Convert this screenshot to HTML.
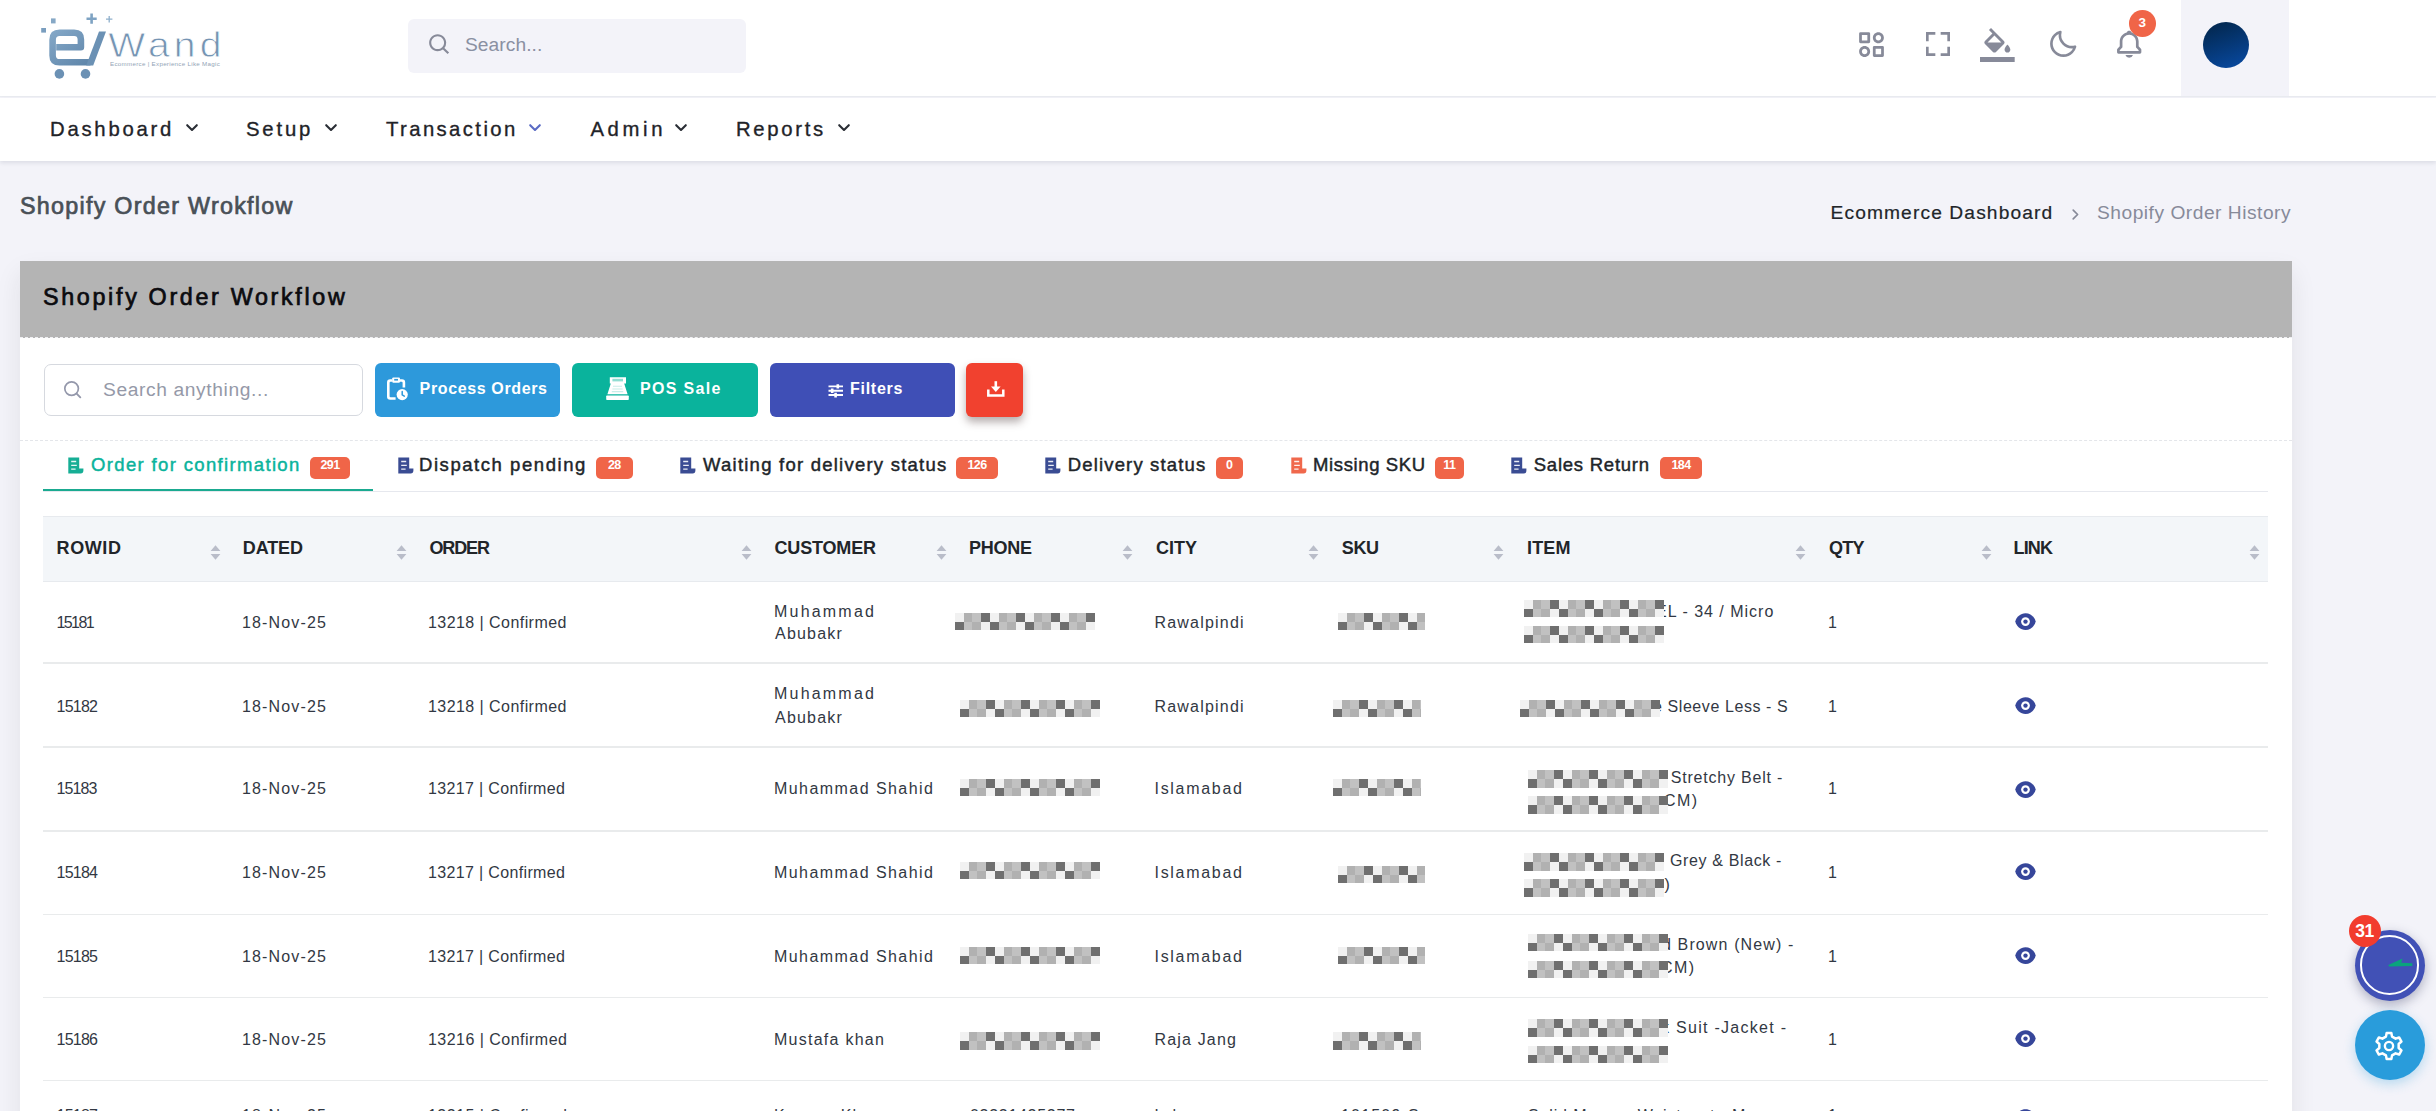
<!DOCTYPE html>
<html lang="en"><head><meta charset="utf-8"><title>Shopify Order Workflow</title>
<style>
*{box-sizing:border-box;margin:0;padding:0}
html,body{width:2436px;height:1111px;overflow:hidden;background:#f3f3f9;font-family:"Liberation Sans",sans-serif}
#pg{position:relative;width:2436px;height:1111px;overflow:hidden;background:#f3f3f9}
.a{position:absolute}
.t{position:absolute;white-space:nowrap;line-height:1em;display:block}
.px{position:absolute;height:17.5px;z-index:1;background:
 linear-gradient(90deg,#f1f1f1 0 25%,#b1b1b1 25% 50%,#c1c1c1 50% 75%,#6f6f6f 75% 100%) 0 0/35px 8.75px repeat-x,
 linear-gradient(90deg,#6f6f6f 0 25%,#c1c1c1 25% 50%,#b1b1b1 50% 75%,#f1f1f1 75% 100%) 0 8.75px/35px 8.75px repeat-x}
.btn{position:absolute;top:363px;height:53.5px;border-radius:6px}
.bdg{position:absolute;top:457px;height:22px;border-radius:5px;background:#f06548;color:#fff;font-weight:700;font-size:12.5px;line-height:17px;text-align:center;letter-spacing:-0.6px}
.rl{position:absolute;left:43px;width:2225px;height:1.5px;background:#e9ebec}
svg{position:absolute;overflow:visible}
</style></head><body><div id="pg">

<div class="a" style="left:0;top:0;width:2436px;height:97px;background:#fff;border-bottom:1.5px solid #e9ebf0"></div>
<div class="a" style="left:2181px;top:0;width:108px;height:96px;background:#f3f3f9"></div>
<div class="a" style="left:2203px;top:22px;width:46px;height:46px;border-radius:50%;background:linear-gradient(160deg,#032a55 15%,#0849a0 95%)"></div>
<div class="a" style="left:407.5px;top:19px;width:338.5px;height:54px;border-radius:6px;background:#f3f3f9"></div>
<svg style="left:0;top:0" width="260" height="96" viewBox="0 0 260 96">
<defs><linearGradient id="lg" x1="0" y1="0" x2="1" y2="1"><stop offset="0" stop-color="#82a6c6"/><stop offset="1" stop-color="#5f86aa"/></linearGradient></defs>
<path d="M56.200 47.200 H80.900 V39.500 Q80.900 32.800 74.200 32.800 H59.600 Q52.600 32.800 52.600 39.800 V55.400 Q52.600 62.300 59.600 62.300 H90.500" fill="none" stroke="url(#lg)" stroke-width="6.600" stroke-linejoin="round"/>
<path d="M99 31.500 H106 L93.200 65.600 H86.200 Z" fill="#6b91b4"/>
<circle cx="59.400" cy="73.900" r="4.800" fill="#6b91b4"/><circle cx="85.500" cy="73.900" r="4.800" fill="#6b91b4"/>
<rect x="41.200" y="28" width="4.800" height="4.600" fill="#7a9ebf"/><rect x="51" y="18.400" width="4.600" height="5" fill="#86a8c6"/>
<path d="M91.600 13.600 V23.800 M86.500 18.700 H96.700" stroke="#7fa3c3" stroke-width="2.600"/>
<path d="M109.200 16 V22.400 M106 19.200 H112.400" stroke="#8fb0cc" stroke-width="1.300"/>
<text transform="translate(108.2 57) scale(1.1 1)" x="0" y="0" font-family="Liberation Sans, sans-serif" font-size="35.500" fill="#7594b3" stroke="#fff" stroke-width=".8" letter-spacing="3.9">Wand</text>
<text x="110" y="66" font-family="Liberation Sans, sans-serif" font-size="6.200" fill="#93a4b6" letter-spacing=".28" textLength="110">Ecommerce | Experience Like Magic</text>
</svg>

<svg style="left:426.9px;top:31.9px" width="25.6" height="25.6" viewBox="0 0 24 24"><path fill="#878a99" d="M10 18a7.952 7.952 0 0 0 4.897-1.688l4.396 4.396 1.414-1.414-4.396-4.396A7.952 7.952 0 0 0 18 10c0-4.411-3.589-8-8-8s-8 3.589-8 8 3.589 8 8 8zm0-14c3.309 0 6 2.691 6 6s-2.691 6-6 6-6-2.691-6-6 2.691-6 6-6z"/></svg>
<svg style="left:1854.9px;top:28px" width="33" height="33" viewBox="0 0 24 24"><path fill="#878a99" d="M10 3H4a1 1 0 0 0-1 1v6a1 1 0 0 0 1 1h6a1 1 0 0 0 1-1V4a1 1 0 0 0-1-1zM9 9H5V5h4v4zm11 4h-6a1 1 0 0 0-1 1v6a1 1 0 0 0 1 1h6a1 1 0 0 0 1-1v-6a1 1 0 0 0-1-1zm-1 6h-4v-4h4v4zM17 3c-2.206 0-4 1.794-4 4s1.794 4 4 4 4-1.794 4-4-1.794-4-4-4zm0 6c-1.103 0-2-.897-2-2s.897-2 2-2 2 .897 2 2-.897 2-2 2zM7 13c-2.206 0-4 1.794-4 4s1.794 4 4 4 4-1.794 4-4-1.794-4-4-4zm0 6c-1.103 0-2-.897-2-2s.897-2 2-2 2 .897 2 2-.897 2-2 2z"/></svg>
<svg style="left:1921.6px;top:28.1px" width="32" height="32" viewBox="0 0 24 24"><path fill="#878a99" d="M5 5h5V3H3v7h2zm5 14H5v-5H3v7h7zm11-5h-2v5h-5v2h7zm-2-4h2V3h-7v2h5z"/></svg>
<svg style="left:1980.3px;top:27.6px" width="34.7" height="34.7" viewBox="0 0 24 24"><path fill="#878a99" d="M16.56 8.94L7.62 0 6.21 1.41l2.38 2.38-5.15 5.15c-.59.59-.59 1.54 0 2.12l5.5 5.5c.29.29.68.44 1.06.44s.77-.15 1.06-.44l5.5-5.5c.59-.58.59-1.53 0-2.12zM5.21 10L10 5.21 14.79 10H5.21zM19 11.5s-2 2.17-2 3.5c0 1.1.9 2 2 2s2-.9 2-2c0-1.33-2-3.500-2-3.500z"/><path fill="#878a99" d="M0 20h24v3.6H0z"/></svg>
<svg style="left:2047.1px;top:27.5px" width="32" height="32" viewBox="0 0 24 24"><path fill="#878a99" d="M20.742 13.045a8.088 8.088 0 0 1-2.077.271c-2.135 0-4.140-.830-5.646-2.336a8.025 8.025 0 0 1-2.064-7.723A1 1 0 0 0 9.730 2.034a10.014 10.014 0 0 0-4.489 2.582c-3.898 3.898-3.898 10.243 0 14.143a9.937 9.937 0 0 0 7.072 2.930 9.930 9.930 0 0 0 7.070-2.929 10.007 10.007 0 0 0 2.583-4.491 1.001 1.001 0 0 0-1.224-1.224zm-2.772 4.301a7.947 7.947 0 0 1-5.656 2.343 7.953 7.953 0 0 1-5.658-2.344c-3.118-3.119-3.118-8.195 0-11.314a7.923 7.923 0 0 1 2.060-1.483 10.027 10.027 0 0 0 2.890 7.848 9.972 9.972 0 0 0 7.848 2.891 8.036 8.036 0 0 1-1.484 2.059z"/></svg>
<svg style="left:2112.5px;top:27.8px" width="32.4" height="32.4" viewBox="0 0 24 24"><path fill="#878a99" d="M19 13.586V10c0-3.217-2.185-5.927-5.145-6.742C13.562 2.520 12.846 2 12 2s-1.562.520-1.855 1.258C7.185 4.074 5 6.783 5 10v3.586l-1.707 1.707A.996.996 0 0 0 3 16v2a1 1 0 0 0 1 1h16a1 1 0 0 0 1-1v-2a.996.996 0 0 0-.293-.707L19 13.586zM19 17H5v-.586l1.707-1.707A.996.996 0 0 0 7 14v-4c0-2.757 2.243-5 5-5s5 2.243 5 5v4c0 .266.105.520.293.707L19 16.414V17zm-7 5a2.980 2.980 0 0 0 2.818-2H9.182A2.980 2.980 0 0 0 12 22z"/></svg>
<div class="a" style="left:2129px;top:10px;width:26.6px;height:26.6px;border-radius:50%;background:#f06548;color:#fff;font-weight:700;font-size:13.5px;line-height:26.6px;text-align:center;z-index:3">3</div>

<div class="a" style="left:0;top:98px;width:2436px;height:62.5px;background:#fff;box-shadow:0 2px 4px rgba(15,34,58,.10)"></div>
<svg style="left:186px;top:124px" width="12" height="8" viewBox="0 0 12 8"><path d="M1.2 1.2 L6 6 L10.8 1.2" fill="none" stroke="#2a2e35" stroke-width="2.1" stroke-linecap="round" stroke-linejoin="round"/></svg>
<svg style="left:325px;top:124px" width="12" height="8" viewBox="0 0 12 8"><path d="M1.2 1.2 L6 6 L10.8 1.2" fill="none" stroke="#2a2e35" stroke-width="2.1" stroke-linecap="round" stroke-linejoin="round"/></svg>
<svg style="left:529px;top:124px" width="12" height="8" viewBox="0 0 12 8"><path d="M1.2 1.2 L6 6 L10.8 1.2" fill="none" stroke="#5a6bc4" stroke-width="2.1" stroke-linecap="round" stroke-linejoin="round"/></svg>
<svg style="left:675.4px;top:124px" width="12" height="8" viewBox="0 0 12 8"><path d="M1.2 1.2 L6 6 L10.8 1.2" fill="none" stroke="#2a2e35" stroke-width="2.1" stroke-linecap="round" stroke-linejoin="round"/></svg>
<svg style="left:837.5px;top:124px" width="12" height="8" viewBox="0 0 12 8"><path d="M1.2 1.2 L6 6 L10.8 1.2" fill="none" stroke="#2a2e35" stroke-width="2.1" stroke-linecap="round" stroke-linejoin="round"/></svg>
<svg style="left:2071.5px;top:209px" width="7" height="11" viewBox="0 0 7 11"><path d="M1.2 1.2 L5.6 5.5 L1.2 9.8" fill="none" stroke="#878a99" stroke-width="1.7" stroke-linecap="round" stroke-linejoin="round"/></svg>
<div class="a" style="left:20px;top:260.5px;width:2271.5px;height:900px;background:#fff;box-shadow:0 12px 24px rgba(30,32,37,.085)"></div>
<div class="a" style="left:20px;top:260.5px;width:2271.5px;height:77.5px;background:#b4b4b4;border-bottom:1.5px dashed #f0f0f3"></div>
<div class="a" style="left:43.5px;top:363.5px;width:319px;height:52.5px;border:1.5px solid #d6d9df;border-radius:7px;background:#fff"></div>
<svg style="left:63px;top:379.5px" width="19" height="19" viewBox="0 0 19 19"><circle cx="8.6" cy="8.6" r="6.8" fill="none" stroke="#9498ab" stroke-width="1.7"/><path d="M13.6 13.6 L17.3 17.3" stroke="#9498ab" stroke-width="1.9" stroke-linecap="round"/></svg>
<div class="btn" style="left:374.5px;width:185px;background:#2d99db"></div>
<div class="btn" style="left:571.7px;width:186.3px;background:#0ab39c"></div>
<div class="btn" style="left:769.5px;width:185px;background:#3f4fb6"></div>
<div class="btn" style="left:966px;width:56.5px;background:#f1412f;box-shadow:0 5px 9px rgba(60,40,40,.38)"></div>
<svg style="left:386.3px;top:376.8px;z-index:2" width="22" height="23.5" viewBox="0 0 22 23.5"><path fill="#fff" d="M6.4 2.2 H4.2 Q1 2.2 1 5.4 V19.6 Q1 22.8 4.200 22.8 H9.600 V20.2 H4.600 Q3.600 20.2 3.600 19.2 V5.800 Q3.600 4.800 4.600 4.800 H6.400 Z M13.800 2.2 H16 Q19.200 2.2 19.200 5.400 V10.600 H16.600 V5.800 Q16.600 4.800 15.600 4.800 H13.800 Z"/><rect x="6.2" y="0.4" width="7.8" height="5.4" rx="1.2" fill="#fff"/><rect x="8.200" y="1.900" width="3.800" height="1.700" fill="#2d99db"/><circle cx="16.200" cy="17.600" r="5.600" fill="#fff"/><path d="M16.200 14.400 V17.900 L18.300 19.200" stroke="#2d99db" stroke-width="1.500" fill="none" stroke-linecap="round"/></svg>
<svg style="left:606px;top:376.6px;z-index:2" width="23" height="23.2" viewBox="0 0 23 23.2"><path fill="#fff" d="M3.800 0.200 H20 V6.400 H18.200 L21.600 17.200 H1.400 L4.800 6.400 H3.800 Z"/><rect x="6.400" y="1.800" width="10.600" height="2.600" fill="#0ab39c" opacity=".45"/><path d="M7 9.200 H16 M6.400 12 H16.600 M5.800 14.600 H17.200" stroke="#0ab39c" stroke-width="1.100" opacity=".22"/><rect x="0.200" y="18.400" width="22.600" height="4.600" rx=".8" fill="#fff"/></svg>
<svg style="left:828px;top:384px;z-index:2" width="15.5" height="13.5" viewBox="0 0 15.5 13.5"><path d="M0.500 2.400 H15 M0.500 6.700 H15 M0.500 11 H15" stroke="#fff" stroke-width="1.900"/><path d="M9.800 0.200 V4.600 M4.200 4.500 V8.900 M7.600 8.800 V13.400" stroke="#fff" stroke-width="2.600"/></svg>
<svg style="left:986.6px;top:381px;z-index:2" width="17.6" height="16" viewBox="0 0 17.600 16"><path d="M1.300 8.600 V14.600 H16.300 V8.600" fill="none" stroke="#fff" stroke-width="2.500"/><path d="M8.800 0.200 V8" stroke="#fff" stroke-width="2.600"/><path d="M4 5.400 H13.600 L8.800 11 Z" fill="#fff"/></svg>

<div class="a" style="left:20px;top:440px;width:2271.5px;height:0;border-top:1.5px dashed #e4e6ea"></div>
<div class="a" style="left:43px;top:490.8px;width:2225px;height:1.6px;background:#e6e8ee"></div>
<div class="a" style="left:43px;top:488.8px;width:329.5px;height:2.6px;background:#1aaa90"></div>
<svg style="left:68.4px;top:457px" width="16" height="17" viewBox="0 0 16 17"><path d="M0.3 0.4 H11.2 V11.6 H15.4 V13.6 Q15.4 16.6 12.6 16.6 H0.3 Z" fill="#16ae95"/><path d="M3.2 4.5 H8.2 M3.2 8.3 H8.8 M3.2 12.1 H7.6" stroke="#fff" stroke-width="1.35" opacity=".9"/></svg>
<svg style="left:398px;top:457px" width="16" height="17" viewBox="0 0 16 17"><path d="M0.3 0.4 H11.2 V11.6 H15.4 V13.6 Q15.4 16.6 12.6 16.6 H0.3 Z" fill="#3a4c93"/><path d="M3.2 4.5 H8.2 M3.2 8.3 H8.8 M3.2 12.1 H7.6" stroke="#fff" stroke-width="1.35" opacity=".9"/></svg>
<svg style="left:680px;top:457px" width="16" height="17" viewBox="0 0 16 17"><path d="M0.3 0.4 H11.2 V11.6 H15.4 V13.6 Q15.4 16.6 12.6 16.6 H0.3 Z" fill="#3a4c93"/><path d="M3.2 4.5 H8.2 M3.2 8.3 H8.8 M3.2 12.1 H7.6" stroke="#fff" stroke-width="1.35" opacity=".9"/></svg>
<svg style="left:1045px;top:457px" width="16" height="17" viewBox="0 0 16 17"><path d="M0.3 0.4 H11.2 V11.6 H15.4 V13.6 Q15.4 16.6 12.6 16.6 H0.3 Z" fill="#3a4c93"/><path d="M3.2 4.5 H8.2 M3.2 8.3 H8.8 M3.2 12.1 H7.6" stroke="#fff" stroke-width="1.35" opacity=".9"/></svg>
<svg style="left:1290.8px;top:457px" width="16" height="17" viewBox="0 0 16 17"><path d="M0.3 0.4 H11.2 V11.6 H15.4 V13.6 Q15.4 16.6 12.6 16.6 H0.3 Z" fill="#f0684c"/><path d="M3.2 4.5 H8.2 M3.2 8.3 H8.8 M3.2 12.1 H7.6" stroke="#fff" stroke-width="1.35" opacity=".9"/></svg>
<svg style="left:1511px;top:457px" width="16" height="17" viewBox="0 0 16 17"><path d="M0.3 0.4 H11.2 V11.6 H15.4 V13.6 Q15.4 16.6 12.6 16.6 H0.3 Z" fill="#3a4c93"/><path d="M3.2 4.5 H8.2 M3.2 8.3 H8.8 M3.2 12.1 H7.6" stroke="#fff" stroke-width="1.35" opacity=".9"/></svg>
<div class="bdg" style="left:310px;width:40px">291</div>
<div class="bdg" style="left:596px;width:36.5px">28</div>
<div class="bdg" style="left:956px;width:42px">126</div>
<div class="bdg" style="left:1216px;width:26.5px">0</div>
<div class="bdg" style="left:1435px;width:28.75px">11</div>
<div class="bdg" style="left:1660px;width:42px">184</div>
<div class="a" style="left:43px;top:516px;width:2225px;height:66px;background:#f3f6f9;border-top:1.5px solid #e7eaee;border-bottom:1.5px solid #e7eaee"></div>
<svg style="left:209.5px;top:545px" width="11" height="15" viewBox="0 0 11 15"><path d="M5.5 0.2 L10.4 6 H0.6 Z M5.5 14.8 L0.6 9 H10.4 Z" fill="#b9bdc9"/></svg>
<svg style="left:395.5px;top:545px" width="11" height="15" viewBox="0 0 11 15"><path d="M5.5 0.2 L10.4 6 H0.6 Z M5.5 14.8 L0.6 9 H10.4 Z" fill="#b9bdc9"/></svg>
<svg style="left:741px;top:545px" width="11" height="15" viewBox="0 0 11 15"><path d="M5.5 0.2 L10.4 6 H0.6 Z M5.5 14.8 L0.6 9 H10.4 Z" fill="#b9bdc9"/></svg>
<svg style="left:936px;top:545px" width="11" height="15" viewBox="0 0 11 15"><path d="M5.5 0.2 L10.4 6 H0.6 Z M5.5 14.8 L0.6 9 H10.4 Z" fill="#b9bdc9"/></svg>
<svg style="left:1121.5px;top:545px" width="11" height="15" viewBox="0 0 11 15"><path d="M5.5 0.2 L10.4 6 H0.6 Z M5.5 14.8 L0.6 9 H10.4 Z" fill="#b9bdc9"/></svg>
<svg style="left:1307.5px;top:545px" width="11" height="15" viewBox="0 0 11 15"><path d="M5.5 0.2 L10.4 6 H0.6 Z M5.5 14.8 L0.6 9 H10.4 Z" fill="#b9bdc9"/></svg>
<svg style="left:1493px;top:545px" width="11" height="15" viewBox="0 0 11 15"><path d="M5.5 0.2 L10.4 6 H0.6 Z M5.5 14.8 L0.6 9 H10.4 Z" fill="#b9bdc9"/></svg>
<svg style="left:1794.5px;top:545px" width="11" height="15" viewBox="0 0 11 15"><path d="M5.5 0.2 L10.4 6 H0.6 Z M5.5 14.8 L0.6 9 H10.4 Z" fill="#b9bdc9"/></svg>
<svg style="left:1980.5px;top:545px" width="11" height="15" viewBox="0 0 11 15"><path d="M5.5 0.2 L10.4 6 H0.6 Z M5.5 14.8 L0.6 9 H10.4 Z" fill="#b9bdc9"/></svg>
<svg style="left:2248.5px;top:545px" width="11" height="15" viewBox="0 0 11 15"><path d="M5.5 0.2 L10.4 6 H0.6 Z M5.5 14.8 L0.6 9 H10.4 Z" fill="#b9bdc9"/></svg>
<div class="rl" style="top:662.25px"></div>
<div class="rl" style="top:746.25px"></div>
<div class="rl" style="top:830.25px"></div>
<div class="rl" style="top:913.85px"></div>
<div class="rl" style="top:996.65px"></div>
<div class="rl" style="top:1079.85px"></div>
<div class="px" style="left:955px;top:612.5px;width:140px"></div>
<div class="px" style="left:959.5px;top:699.5px;width:140px"></div>
<div class="px" style="left:959.5px;top:778.75px;width:140px"></div>
<div class="px" style="left:959.5px;top:861.75px;width:140px"></div>
<div class="px" style="left:959.5px;top:946.75px;width:140px"></div>
<div class="px" style="left:959.5px;top:1032.25px;width:140px"></div>
<div class="px" style="left:1337.5px;top:612.5px;width:87.5px"></div>
<div class="px" style="left:1333px;top:699.5px;width:87.5px"></div>
<div class="px" style="left:1333px;top:778.75px;width:87.5px"></div>
<div class="px" style="left:1337.5px;top:865.5px;width:87.5px"></div>
<div class="px" style="left:1337.5px;top:946.75px;width:87.5px"></div>
<div class="px" style="left:1333.25px;top:1032.25px;width:87.5px"></div>
<div class="px" style="left:1523.75px;top:599.5px;width:140px"></div>
<div class="px" style="left:1523.75px;top:625.75px;width:140px"></div>
<div class="px" style="left:1519.5px;top:699.5px;width:140px"></div>
<div class="px" style="left:1528px;top:770px;width:140px"></div>
<div class="px" style="left:1528px;top:796.25px;width:140px"></div>
<div class="px" style="left:1523.75px;top:853px;width:140px"></div>
<div class="px" style="left:1523.75px;top:879.25px;width:140px"></div>
<div class="px" style="left:1528px;top:933.75px;width:140px"></div>
<div class="px" style="left:1528px;top:960.5px;width:140px"></div>
<div class="px" style="left:1528px;top:1019.25px;width:140px"></div>
<div class="px" style="left:1528px;top:1045.5px;width:140px"></div>
<svg style="left:2014.6px;top:613.0px" width="21" height="17.2" viewBox="0 0 21 17.2"><path d="M10.5 0.3 C15.6 0.3 19.6 3.9 20.7 8.6 C19.6 13.3 15.6 16.9 10.5 16.9 C5.4 16.9 1.4 13.3 0.3 8.6 C1.4 3.9 5.4 0.3 10.5 0.3 Z" fill="#36469a"/><circle cx="10.5" cy="8.6" r="4.4" fill="#fff"/><circle cx="10.5" cy="8.6" r="2.2" fill="#36469a"/></svg>
<svg style="left:2014.6px;top:696.8px" width="21" height="17.2" viewBox="0 0 21 17.2"><path d="M10.5 0.3 C15.6 0.3 19.6 3.9 20.7 8.6 C19.6 13.3 15.6 16.9 10.5 16.9 C5.4 16.9 1.4 13.3 0.3 8.6 C1.4 3.9 5.4 0.3 10.5 0.3 Z" fill="#36469a"/><circle cx="10.5" cy="8.6" r="4.4" fill="#fff"/><circle cx="10.5" cy="8.6" r="2.2" fill="#36469a"/></svg>
<svg style="left:2014.6px;top:780.8px" width="21" height="17.2" viewBox="0 0 21 17.2"><path d="M10.5 0.3 C15.6 0.3 19.6 3.9 20.7 8.6 C19.6 13.3 15.6 16.9 10.5 16.9 C5.4 16.9 1.4 13.3 0.3 8.6 C1.4 3.9 5.4 0.3 10.5 0.3 Z" fill="#36469a"/><circle cx="10.5" cy="8.6" r="4.4" fill="#fff"/><circle cx="10.5" cy="8.6" r="2.2" fill="#36469a"/></svg>
<svg style="left:2014.6px;top:862.9px" width="21" height="17.2" viewBox="0 0 21 17.2"><path d="M10.5 0.3 C15.6 0.3 19.6 3.9 20.7 8.6 C19.6 13.3 15.6 16.9 10.5 16.9 C5.4 16.9 1.4 13.3 0.3 8.6 C1.4 3.9 5.4 0.3 10.5 0.3 Z" fill="#36469a"/><circle cx="10.5" cy="8.6" r="4.4" fill="#fff"/><circle cx="10.5" cy="8.6" r="2.2" fill="#36469a"/></svg>
<svg style="left:2014.6px;top:946.9px" width="21" height="17.2" viewBox="0 0 21 17.2"><path d="M10.5 0.3 C15.6 0.3 19.6 3.9 20.7 8.6 C19.6 13.3 15.6 16.9 10.5 16.9 C5.4 16.9 1.4 13.3 0.3 8.6 C1.4 3.9 5.4 0.3 10.5 0.3 Z" fill="#36469a"/><circle cx="10.5" cy="8.6" r="4.4" fill="#fff"/><circle cx="10.5" cy="8.6" r="2.2" fill="#36469a"/></svg>
<svg style="left:2014.6px;top:1030.4px" width="21" height="17.2" viewBox="0 0 21 17.2"><path d="M10.5 0.3 C15.6 0.3 19.6 3.9 20.7 8.6 C19.6 13.3 15.6 16.9 10.5 16.9 C5.4 16.9 1.4 13.3 0.3 8.6 C1.4 3.9 5.4 0.3 10.5 0.3 Z" fill="#36469a"/><circle cx="10.5" cy="8.6" r="4.4" fill="#fff"/><circle cx="10.5" cy="8.6" r="2.2" fill="#36469a"/></svg>
<svg style="left:2014.6px;top:1109.0px" width="21" height="17.2" viewBox="0 0 21 17.2"><path d="M10.5 0.3 C15.6 0.3 19.6 3.9 20.7 8.6 C19.6 13.3 15.6 16.9 10.5 16.9 C5.4 16.9 1.4 13.3 0.3 8.6 C1.4 3.9 5.4 0.3 10.5 0.3 Z" fill="#36469a"/><circle cx="10.5" cy="8.6" r="4.4" fill="#fff"/><circle cx="10.5" cy="8.6" r="2.2" fill="#36469a"/></svg>
<div class="a" style="left:2354.5px;top:929.5px;width:70px;height:71px;border-radius:50%;background:#4151b6;box-shadow:0 4px 12px rgba(40,45,90,.35);z-index:4"></div>
<div class="a" style="left:2359.8px;top:935.4px;width:59.4px;height:59.4px;border-radius:50%;border:2.2px solid #fff;z-index:4"></div>
<svg style="left:2387.6px;top:957.6px;z-index:5" width="25" height="10" viewBox="0 0 25 10"><path d="M0.300 6.900 L14.500 0.600 L13.200 4.700 L24.300 5.200 L24.300 8 L1 8.600 Z" fill="#0aa47d"/></svg>
<div class="a" style="left:2348.5px;top:915px;width:32px;height:32px;border-radius:50%;background:#f23c2e;color:#fff;font-weight:700;font-size:17.5px;line-height:32px;text-align:center;letter-spacing:-0.4px;z-index:6">31</div>
<div class="a" style="left:2354.5px;top:1010px;width:70px;height:70px;border-radius:50%;background:#299cdb;box-shadow:0 4px 12px rgba(41,156,219,.30);z-index:4"></div>
<svg style="left:2374.4px;top:1030.6px;z-index:5" width="30" height="30" viewBox="0 0 24 24"><path fill="none" stroke="#fff" stroke-width="2" stroke-linejoin="round" d="M9.56 4.49 L10.12 1.57 L13.88 1.57 L14.44 4.49 L17.29 6.13 L20.10 5.16 L21.97 8.41 L19.73 10.36 L19.73 13.64 L21.97 15.59 L20.10 18.84 L17.29 17.87 L14.44 19.51 L13.88 22.43 L10.12 22.43 L9.56 19.51 L6.71 17.87 L3.90 18.84 L2.03 15.59 L4.27 13.64 L4.27 10.36 L2.03 8.41 L3.90 5.16 L6.71 6.13 Z"/><circle cx="12" cy="12" r="3.3" fill="none" stroke="#fff" stroke-width="1.9"/></svg>

<span class="t" style="left:465.00px;top:34.75px;font-size:19.2px;color:#8a90a2;letter-spacing:0.068px;z-index:1;">Search...</span>
<span class="t" style="left:50.00px;top:118.82px;font-size:20.3px;color:#1f2328;letter-spacing:2.758px;z-index:1;-webkit-text-stroke:0.35px #1f2328;">Dashboard</span>
<span class="t" style="left:246.00px;top:118.82px;font-size:20.3px;color:#1f2328;letter-spacing:2.820px;z-index:1;-webkit-text-stroke:0.35px #1f2328;">Setup</span>
<span class="t" style="left:386.00px;top:118.82px;font-size:20.3px;color:#1f2328;letter-spacing:2.407px;z-index:1;-webkit-text-stroke:0.35px #1f2328;">Transaction</span>
<span class="t" style="left:590.40px;top:118.82px;font-size:20.3px;color:#1f2328;letter-spacing:3.673px;z-index:1;-webkit-text-stroke:0.35px #1f2328;">Admin</span>
<span class="t" style="left:736.00px;top:118.82px;font-size:20.3px;color:#1f2328;letter-spacing:2.688px;z-index:1;-webkit-text-stroke:0.35px #1f2328;">Reports</span>
<span class="t" style="left:20.00px;top:194.78px;font-size:23.3px;color:#495057;letter-spacing:1.274px;z-index:1;-webkit-text-stroke:0.7px #495057;">Shopify Order Wrokflow</span>
<span class="t" style="left:1830.50px;top:202.75px;font-size:19.2px;color:#212529;letter-spacing:1.118px;z-index:1;-webkit-text-stroke:0.2px #212529;">Ecommerce Dashboard</span>
<span class="t" style="left:2097.00px;top:202.75px;font-size:19.2px;color:#878a99;letter-spacing:0.509px;z-index:1;">Shopify Order History</span>
<span class="t" style="left:43.00px;top:286.28px;font-size:23.3px;color:#0b0b0f;letter-spacing:2.679px;z-index:1;-webkit-text-stroke:0.7px #0b0b0f;">Shopify Order Workflow</span>
<span class="t" style="left:103.00px;top:379.75px;font-size:19.2px;color:#9599a8;letter-spacing:0.628px;z-index:1;">Search anything...</span>
<span class="t" style="left:419.60px;top:381.36px;font-size:16px;color:#ffffff;letter-spacing:0.625px;z-index:1;font-weight:700;">Process Orders</span>
<span class="t" style="left:640.00px;top:381.36px;font-size:16px;color:#ffffff;letter-spacing:1.321px;z-index:1;font-weight:700;">POS Sale</span>
<span class="t" style="left:850.00px;top:381.36px;font-size:16px;color:#ffffff;letter-spacing:0.730px;z-index:1;font-weight:700;">Filters</span>
<span class="t" style="left:91.00px;top:456.34px;font-size:18.5px;color:#0ab39c;letter-spacing:1.351px;z-index:1;-webkit-text-stroke:0.45px #0ab39c;">Order for confirmation</span>
<span class="t" style="left:419.00px;top:456.34px;font-size:18.5px;color:#212529;letter-spacing:1.555px;z-index:1;-webkit-text-stroke:0.45px #212529;">Dispatch pending</span>
<span class="t" style="left:703.00px;top:456.34px;font-size:18.5px;color:#212529;letter-spacing:1.236px;z-index:1;-webkit-text-stroke:0.45px #212529;">Waiting for delivery status</span>
<span class="t" style="left:1067.75px;top:456.34px;font-size:18.5px;color:#212529;letter-spacing:1.156px;z-index:1;-webkit-text-stroke:0.45px #212529;">Delivery status</span>
<span class="t" style="left:1313.00px;top:456.34px;font-size:18.5px;color:#212529;letter-spacing:0.622px;z-index:1;-webkit-text-stroke:0.45px #212529;">Missing SKU</span>
<span class="t" style="left:1533.75px;top:456.34px;font-size:18.5px;color:#212529;letter-spacing:0.759px;z-index:1;-webkit-text-stroke:0.45px #212529;">Sales Return</span>
<span class="t" style="left:56.50px;top:538.51px;font-size:18px;color:#212529;letter-spacing:0.627px;z-index:1;font-weight:700;">ROWID</span>
<span class="t" style="left:242.75px;top:538.51px;font-size:18px;color:#212529;letter-spacing:-0.103px;z-index:1;font-weight:700;">DATED</span>
<span class="t" style="left:429.50px;top:538.51px;font-size:18px;color:#212529;letter-spacing:-1.126px;z-index:1;font-weight:700;">ORDER</span>
<span class="t" style="left:774.50px;top:538.51px;font-size:18px;color:#212529;letter-spacing:-0.168px;z-index:1;font-weight:700;">CUSTOMER</span>
<span class="t" style="left:969.00px;top:538.51px;font-size:18px;color:#212529;letter-spacing:-0.251px;z-index:1;font-weight:700;">PHONE</span>
<span class="t" style="left:1156.00px;top:538.51px;font-size:18px;color:#212529;letter-spacing:0.002px;z-index:1;font-weight:700;">CITY</span>
<span class="t" style="left:1341.75px;top:538.51px;font-size:18px;color:#212529;letter-spacing:-0.377px;z-index:1;font-weight:700;">SKU</span>
<span class="t" style="left:1527.00px;top:538.51px;font-size:18px;color:#212529;letter-spacing:0.166px;z-index:1;font-weight:700;">ITEM</span>
<span class="t" style="left:1829.00px;top:538.51px;font-size:18px;color:#212529;letter-spacing:-0.748px;z-index:1;font-weight:700;">QTY</span>
<span class="t" style="left:2013.50px;top:538.51px;font-size:18px;color:#212529;letter-spacing:-0.832px;z-index:1;font-weight:700;">LINK</span>
<span class="t" style="left:56.50px;top:615.36px;font-size:16px;color:#323843;letter-spacing:-1.600px;z-index:1;">15181</span>
<span class="t" style="left:242.00px;top:615.36px;font-size:16px;color:#323843;letter-spacing:1.149px;z-index:1;">18-Nov-25</span>
<span class="t" style="left:428.00px;top:615.36px;font-size:16px;color:#323843;letter-spacing:0.441px;z-index:1;">13218 | Confirmed</span>
<span class="t" style="left:1154.50px;top:615.36px;font-size:16px;color:#323843;letter-spacing:1.199px;z-index:1;">Rawalpindi</span>
<span class="t" style="left:1828.00px;top:615.36px;font-size:16px;color:#323843;letter-spacing:0.000px;z-index:1;">1</span>
<span class="t" style="left:56.50px;top:698.86px;font-size:16px;color:#323843;letter-spacing:-0.773px;z-index:1;">15182</span>
<span class="t" style="left:242.00px;top:698.86px;font-size:16px;color:#323843;letter-spacing:1.149px;z-index:1;">18-Nov-25</span>
<span class="t" style="left:428.00px;top:698.86px;font-size:16px;color:#323843;letter-spacing:0.441px;z-index:1;">13218 | Confirmed</span>
<span class="t" style="left:1154.50px;top:698.86px;font-size:16px;color:#323843;letter-spacing:1.199px;z-index:1;">Rawalpindi</span>
<span class="t" style="left:1828.00px;top:698.86px;font-size:16px;color:#323843;letter-spacing:0.000px;z-index:1;">1</span>
<span class="t" style="left:56.50px;top:780.86px;font-size:16px;color:#323843;letter-spacing:-0.898px;z-index:1;">15183</span>
<span class="t" style="left:242.00px;top:780.86px;font-size:16px;color:#323843;letter-spacing:1.149px;z-index:1;">18-Nov-25</span>
<span class="t" style="left:428.00px;top:780.86px;font-size:16px;color:#323843;letter-spacing:0.347px;z-index:1;">13217 | Confirmed</span>
<span class="t" style="left:1154.50px;top:780.86px;font-size:16px;color:#323843;letter-spacing:1.697px;z-index:1;">Islamabad</span>
<span class="t" style="left:1828.00px;top:780.86px;font-size:16px;color:#323843;letter-spacing:0.000px;z-index:1;">1</span>
<span class="t" style="left:56.50px;top:865.11px;font-size:16px;color:#323843;letter-spacing:-0.773px;z-index:1;">15184</span>
<span class="t" style="left:242.00px;top:865.11px;font-size:16px;color:#323843;letter-spacing:1.149px;z-index:1;">18-Nov-25</span>
<span class="t" style="left:428.00px;top:865.11px;font-size:16px;color:#323843;letter-spacing:0.347px;z-index:1;">13217 | Confirmed</span>
<span class="t" style="left:1154.50px;top:865.11px;font-size:16px;color:#323843;letter-spacing:1.697px;z-index:1;">Islamabad</span>
<span class="t" style="left:1828.00px;top:865.11px;font-size:16px;color:#323843;letter-spacing:0.000px;z-index:1;">1</span>
<span class="t" style="left:56.50px;top:948.76px;font-size:16px;color:#323843;letter-spacing:-0.773px;z-index:1;">15185</span>
<span class="t" style="left:242.00px;top:948.76px;font-size:16px;color:#323843;letter-spacing:1.149px;z-index:1;">18-Nov-25</span>
<span class="t" style="left:428.00px;top:948.76px;font-size:16px;color:#323843;letter-spacing:0.347px;z-index:1;">13217 | Confirmed</span>
<span class="t" style="left:1154.50px;top:948.76px;font-size:16px;color:#323843;letter-spacing:1.697px;z-index:1;">Islamabad</span>
<span class="t" style="left:1828.00px;top:948.76px;font-size:16px;color:#323843;letter-spacing:0.000px;z-index:1;">1</span>
<span class="t" style="left:56.50px;top:1032.36px;font-size:16px;color:#323843;letter-spacing:-0.773px;z-index:1;">15186</span>
<span class="t" style="left:242.00px;top:1032.36px;font-size:16px;color:#323843;letter-spacing:1.149px;z-index:1;">18-Nov-25</span>
<span class="t" style="left:428.00px;top:1032.36px;font-size:16px;color:#323843;letter-spacing:0.472px;z-index:1;">13216 | Confirmed</span>
<span class="t" style="left:1154.50px;top:1032.36px;font-size:16px;color:#323843;letter-spacing:1.169px;z-index:1;">Raja Jang</span>
<span class="t" style="left:1828.00px;top:1032.36px;font-size:16px;color:#323843;letter-spacing:0.000px;z-index:1;">1</span>
<span class="t" style="left:56.50px;top:1107.56px;font-size:16px;color:#323843;letter-spacing:-0.773px;z-index:1;">15187</span>
<span class="t" style="left:242.00px;top:1107.56px;font-size:16px;color:#323843;letter-spacing:1.149px;z-index:1;">18-Nov-25</span>
<span class="t" style="left:428.00px;top:1107.56px;font-size:16px;color:#323843;letter-spacing:0.472px;z-index:1;">13215 | Confirmed</span>
<span class="t" style="left:1154.50px;top:1107.56px;font-size:16px;color:#323843;letter-spacing:0.116px;z-index:1;">Lahore</span>
<span class="t" style="left:1828.00px;top:1107.56px;font-size:16px;color:#323843;letter-spacing:0.000px;z-index:1;">1</span>
<span class="t" style="left:774.00px;top:603.96px;font-size:16px;color:#323843;letter-spacing:2.203px;z-index:1;">Muhammad</span>
<span class="t" style="left:775.00px;top:626.06px;font-size:16px;color:#323843;letter-spacing:1.206px;z-index:1;">Abubakr</span>
<span class="t" style="left:774.00px;top:685.86px;font-size:16px;color:#323843;letter-spacing:2.203px;z-index:1;">Muhammad</span>
<span class="t" style="left:775.00px;top:710.16px;font-size:16px;color:#323843;letter-spacing:1.206px;z-index:1;">Abubakr</span>
<span class="t" style="left:774.00px;top:780.86px;font-size:16px;color:#323843;letter-spacing:1.440px;z-index:1;">Muhammad Shahid</span>
<span class="t" style="left:774.00px;top:865.11px;font-size:16px;color:#323843;letter-spacing:1.440px;z-index:1;">Muhammad Shahid</span>
<span class="t" style="left:774.00px;top:948.76px;font-size:16px;color:#323843;letter-spacing:1.440px;z-index:1;">Muhammad Shahid</span>
<span class="t" style="left:774.00px;top:1032.36px;font-size:16px;color:#323843;letter-spacing:1.259px;z-index:1;">Mustafa khan</span>
<span class="t" style="left:774.00px;top:1107.56px;font-size:16px;color:#323843;letter-spacing:0.906px;z-index:1;">Kamran Khan</span>
<span class="t" style="left:970.00px;top:1107.56px;font-size:16px;color:#323843;letter-spacing:0.702px;z-index:1;">03331425277</span>
<span class="t" style="left:1341.00px;top:1107.56px;font-size:16px;color:#323843;letter-spacing:1.183px;z-index:1;">101509-S</span>
<span class="t" style="left:1528.00px;top:1107.56px;font-size:16px;color:#323843;letter-spacing:0.857px;z-index:1;">Solid Maroon Waistcoat - M</span>
<span class="t" style="left:1656.00px;top:604.46px;font-size:16px;color:#323843;letter-spacing:0.991px;z-index:0;">EL - 34 / Micro</span>
<span class="t" style="left:1653.00px;top:699.06px;font-size:16px;color:#323843;letter-spacing:0.580px;z-index:0;">e Sleeve Less - S</span>
<span class="t" style="left:1670.75px;top:769.86px;font-size:16px;color:#323843;letter-spacing:0.793px;z-index:0;">Stretchy Belt -</span>
<span class="t" style="left:1664.00px;top:793.46px;font-size:16px;color:#323843;letter-spacing:1.434px;z-index:0;">CM)</span>
<span class="t" style="left:1670.00px;top:853.46px;font-size:16px;color:#323843;letter-spacing:0.630px;z-index:0;">Grey &amp; Black -</span>
<span class="t" style="left:1664.50px;top:877.46px;font-size:16px;color:#323843;letter-spacing:0.000px;z-index:2;">)</span>
<span class="t" style="left:1662.00px;top:937.46px;font-size:16px;color:#323843;letter-spacing:1.125px;z-index:0;">d Brown (New) -</span>
<span class="t" style="left:1661.00px;top:960.46px;font-size:16px;color:#323843;letter-spacing:1.434px;z-index:0;">CM)</span>
<span class="t" style="left:1661.00px;top:1019.96px;font-size:16px;color:#323843;letter-spacing:1.285px;z-index:0;">k Suit -Jacket -</span>
</div></body></html>
